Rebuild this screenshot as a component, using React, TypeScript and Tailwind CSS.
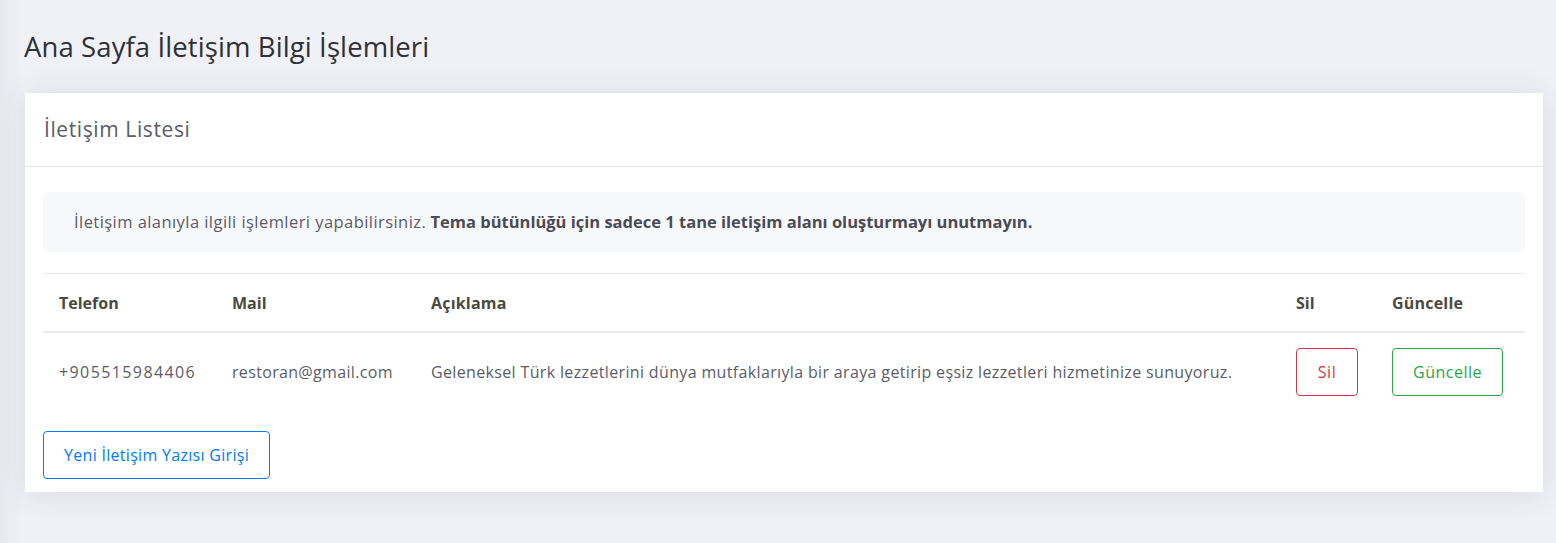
import React from "react";

export default function App() {
  const font = { fontFamily: "'Open Sans', 'Noto Sans', sans-serif" };
  return (
    <div
      className="min-h-[543px] w-full bg-[#f0f1f6] bg-[linear-gradient(to_right,#e8e9ef_0px,#eef0f5_20px,#f0f1f6_24px)] text-[#5a5c69]"
      style={font}
    >
      <div className="pt-[29px] pb-[51px]">
        <h1 className="ml-[24px] text-[27.5px] leading-[36px] tracking-[0.1px] text-[#2f3037]">
          Ana Sayfa İletişim Bilgi İşlemleri
        </h1>
        <div className="ml-[25px] mt-[28px] w-[1518px] bg-white shadow-[0_2px_28px_rgba(58,59,69,0.12)]">
          <div className="h-[74px] flex items-center pl-[19px] border-b border-[#e6e7ef] text-[21px] tracking-[0.6px] text-[#5a5c69]">
            İletişim Listesi
          </div>
          <div className="px-[18px] pt-[25px] pb-[13px]">
            <div className="h-[60px] flex items-center rounded-[6px] bg-[#f7f8fa] pl-[31px] text-[16.5px] text-[#5a5c69]">
              <span>
                <span className="tracking-[0.44px]">İletişim alanıyla ilgili işlemleri yapabilirsiniz.</span>{" "}
                <b className="font-bold text-[#4a4b55]">
                  Tema bütünlüğü için sadece 1 tane iletişim alanı oluşturmayı unutmayın.
                </b>
              </span>
            </div>
            <div className="mt-[21px] border-t border-[#e9eaf0]">
              <div className="flex h-[59px] items-center border-b-2 border-[#e9eaf0] text-[16px] font-bold text-[#4a4a40]">
                <div className="w-[173px] pl-[16px]">Telefon</div>
                <div className="w-[199px] pl-[16px]">Mail</div>
                <div className="w-[865px] pl-[16px] tracking-[0.2px]">Açıklama</div>
                <div className="w-[96px] pl-[16px]">Sil</div>
                <div className="w-[148px] pl-[16px] tracking-[0.2px]">Güncelle</div>
              </div>
              <div className="flex h-[78px] items-center text-[16px] text-[#5a5c69]">
                <div className="w-[173px] pl-[16px] tracking-[1.4px]">+905515984406</div>
                <div className="w-[199px] pl-[16px] tracking-[0.33px]">restoran@gmail.com</div>
                <div className="w-[865px] pl-[16px] tracking-[0.35px]">
                  Geleneksel Türk lezzetlerini dünya mutfaklarıyla bir araya getirip eşsiz lezzetleri hizmetinize sunuyoruz.
                </div>
                <div className="w-[96px] pl-[16px]">
                  <button className="h-[48px] w-[62px] rounded-[4px] border border-[#dc3545] text-[16px] tracking-[0.5px] text-[#dc3545]">
                    Sil
                  </button>
                </div>
                <div className="w-[148px] pl-[16px]">
                  <button className="h-[48px] w-[111px] rounded-[4px] border border-[#28a745] text-[16px] tracking-[0.5px] text-[#28a745]">
                    Güncelle
                  </button>
                </div>
              </div>
            </div>
            <button className="mt-[20px] h-[48px] w-[227px] rounded-[4px] border border-[#007bff] text-[16px] tracking-[0.3px] text-[#007bff]">
              Yeni İletişim Yazısı Girişi
            </button>
          </div>
        </div>
      </div>
    </div>
  );
}
